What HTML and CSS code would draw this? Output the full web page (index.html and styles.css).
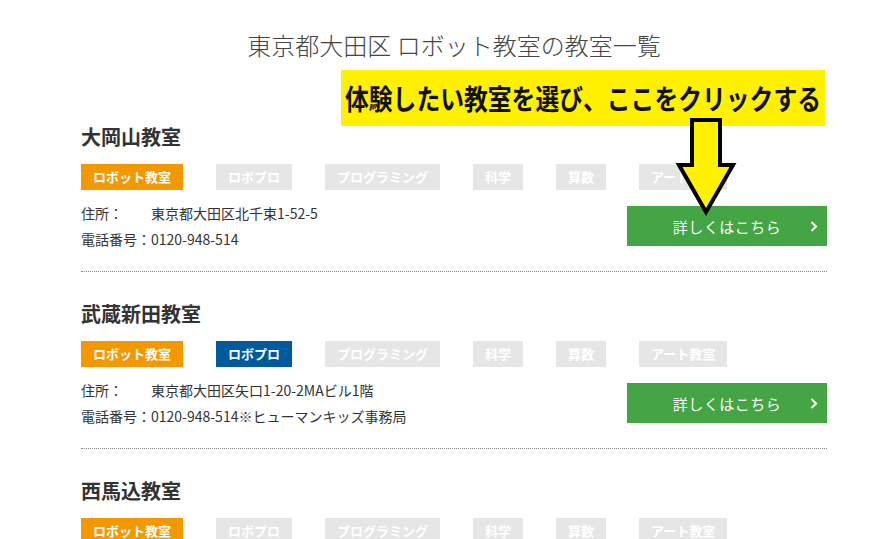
FILE: index.html
```html
<!DOCTYPE html>
<html lang="ja">

<head>
    <meta charset="UTF-8">
    <meta name="viewport" content="width=device-width, initial-scale=1.0">
    <title>東京都大田区 ロボット教室の教室一覧</title>
    <link rel="stylesheet" href="styles.css">
</head>

<body>
    <div class="page">
        <h1 class="page-title">東京都大田区 ロボット教室の教室一覧</h1>

        <div class="school">
            <h2>大岡山教室</h2>
            <ul class="tags">
                <li class="tag tag-robot">ロボット教室</li>
                <li class="tag">ロボプロ</li>
                <li class="tag">プログラミング</li>
                <li class="tag">科学</li>
                <li class="tag">算数</li>
                <li class="tag">アート教室</li>
            </ul>
            <div class="school-info">
                <div class="info-lines">
                    <p><span class="label">住所：</span>東京都大田区北千束1-52-5</p>
                    <p><span class="label">電話番号：</span>0120-948-514</p>
                </div>
                <a class="detail-btn" href="#">詳しくはこちら
                    <svg class="chevron" width="8" height="11" viewBox="0 0 8 11"><path d="M1.5 1 L6 5.5 L1.5 10" /></svg>
                </a>
            </div>
        </div>

        <div class="school">
            <h2>武蔵新田教室</h2>
            <ul class="tags">
                <li class="tag tag-robot">ロボット教室</li>
                <li class="tag tag-robopro">ロボプロ</li>
                <li class="tag">プログラミング</li>
                <li class="tag">科学</li>
                <li class="tag">算数</li>
                <li class="tag">アート教室</li>
            </ul>
            <div class="school-info">
                <div class="info-lines">
                    <p><span class="label">住所：</span>東京都大田区矢口1-20-2MAビル1階</p>
                    <p><span class="label">電話番号：</span>0120-948-514※ヒューマンキッズ事務局</p>
                </div>
                <a class="detail-btn" href="#">詳しくはこちら
                    <svg class="chevron" width="8" height="11" viewBox="0 0 8 11"><path d="M1.5 1 L6 5.5 L1.5 10" /></svg>
                </a>
            </div>
        </div>

        <div class="school">
            <h2>西馬込教室</h2>
            <ul class="tags">
                <li class="tag tag-robot">ロボット教室</li>
                <li class="tag">ロボプロ</li>
                <li class="tag">プログラミング</li>
                <li class="tag">科学</li>
                <li class="tag">算数</li>
                <li class="tag">アート教室</li>
            </ul>
        </div>

        <!-- annotation over the screenshot -->
        <div class="note"><span>体験したい教室を選び、ここをクリックする</span></div>
        <svg class="note-arrow" width="62" height="104" viewBox="0 0 62 104">
            <path d="M17 4 H45 V49 H58 L31 96 L4 49 H17 Z" />
        </svg>
    </div>
</body>

</html>
```

FILE: styles.css
```css
body {
    margin: 0;
    font-family: "Noto Sans CJK JP", "Noto Sans", sans-serif;
    background-color: #ffffff;
    color: #333333;
    overflow: hidden;
}

.page {
    position: relative;
    width: 746px;
    margin-left: 81px;
    padding-top: 30px;
}

.page-title {
    margin: 0 0 35px;
    font-size: 24px;
    line-height: 30px;
    font-weight: 300;
    color: #444444;
    text-align: center;
}

.school {
    padding: 28px 0 19px;
    border-bottom: 1px dotted #8a8a8a;
}

.school h2 {
    margin: 0;
    font-size: 20px;
    line-height: 28px;
    font-weight: 700;
    color: #333333;
}

.tags {
    display: flex;
    gap: 33px;
    margin: 13px 0 0;
    padding: 0;
    list-style: none;
}

.tag {
    height: 26px;
    padding: 0 12px;
    line-height: 26px;
    font-size: 13px;
    font-weight: 700;
    color: #ffffff;
    background-color: #e6e6e6;
}

.tag-robot {
    background-color: #f39800;
}

.tag-robopro {
    background-color: #005a9c;
}

.school-info {
    display: flex;
    justify-content: space-between;
    align-items: flex-start;
    margin-top: 10px;
}

.info-lines p {
    margin: 0;
    font-size: 14px;
    line-height: 26px;
    color: #333333;
}

.label {
    display: inline-block;
    width: 70px;
}

.detail-btn {
    position: relative;
    display: flex;
    align-items: center;
    justify-content: center;
    width: 200px;
    height: 40px;
    margin-top: 6px;
    background-color: #43a544;
    color: #ffffff;
    font-size: 15px;
    letter-spacing: 0.5px;
    text-decoration: none;
}

.chevron {
    position: absolute;
    right: 9px;
    top: 15px;
}

.chevron path {
    fill: none;
    stroke: #ffffff;
    stroke-width: 2;
}

.note {
    position: absolute;
    left: 260px;
    top: 70px;
    width: 484px;
    height: 56px;
    background-color: #fff100;
    display: flex;
    align-items: center;
    justify-content: center;
    overflow: hidden;
}

.note span {
    display: inline-block;
    font-size: 28px;
    font-weight: 700;
    color: #111111;
    white-space: nowrap;
    transform: scaleX(0.85);
}

.note-arrow {
    position: absolute;
    left: 594px;
    top: 116px;
}

.note-arrow path {
    fill: #fff100;
    stroke: #000000;
    stroke-width: 4;
    stroke-linejoin: miter;
}
```
